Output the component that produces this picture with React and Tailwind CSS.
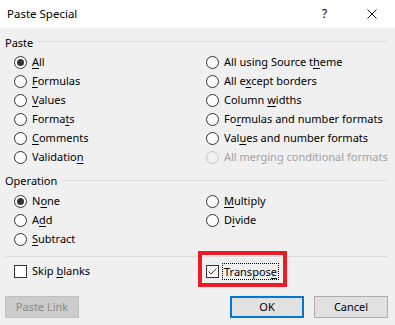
const pasteLeft = [
  ['', 'A', 'll', true],
  ['', 'F', 'ormulas'],
  ['', 'V', 'alues'],
  ['Forma', 't', 's'],
  ['', 'C', 'omments'],
  ['Validatio', 'n', ''],
];

const pasteRight = [
  ['All using Source t', 'h', 'eme'],
  ['All e', 'x', 'cept borders'],
  ['Column ', 'w', 'idths'],
  ['Fo', 'r', 'mulas and number formats'],
  ['Val', 'u', 'es and number formats'],
  ['All merging conditional formats', '', '', false, true],
];

const opLeft = [
  ['N', 'o', 'ne', true],
  ['A', 'd', 'd'],
  ['', 'S', 'ubtract'],
];

const opRight = [
  ['', 'M', 'ultiply'],
  ['D', 'i', 'vide'],
];

const Label = ({ pre, k, post }) => (
  <span className="whitespace-nowrap">
    {pre}
    {k && <span className="underline underline-offset-2 decoration-1">{k}</span>}
    {post}
  </span>
);

const Radio = ({ item }) => {
  const [pre, k, post, checked, disabled] = item;
  return (
    <div className={`h-[19px] flex items-center gap-[5px] ${disabled ? 'text-[#a0a0a0]' : 'text-black'}`}>
      <span
        className={`w-[13px] h-[13px] rounded-full border flex items-center justify-center shrink-0 ${
          disabled ? 'border-[#c6c6c6] bg-[#f0f0f0]' : 'border-[#333] bg-white'
        }`}
      >
        {checked && <span className="w-[7px] h-[7px] rounded-full bg-[#333]" />}
      </span>
      <Label pre={pre} k={k} post={post} />
    </div>
  );
};

const GroupHeader = ({ title, lineGap }) => (
  <div className="h-[16px] flex items-start">
    <span className="leading-[16px]">{title}</span>
    <span className={`flex-1 h-px bg-[#dcdcdc] ${lineGap}`} />
  </div>
);

const Button = ({ children, variant }) => {
  const styles = {
    default: 'bg-[#e1e1e1] border border-[#adadad] text-black',
    primary: 'bg-[#e1e1e1] border-2 border-[#0078d7] text-black',
    disabled: 'bg-[#cccccc] border border-[#bfbfbf] text-[#8a8a8a]',
  };
  return (
    <div className={`w-[74px] h-[22px] flex items-center justify-center ${styles[variant]}`}>
      {children}
    </div>
  );
};

export default function App() {
  return (
    <div className="w-[395px] h-[325px] bg-[#f0f0f0] text-[11px] font-['Noto_Sans',sans-serif] text-black overflow-hidden">
      {/* Title bar */}
      <div className="h-[28px] bg-white flex items-center pl-[7px] text-[11.5px]">
        <span className="flex-1">Paste Special</span>
        <span className="w-[10px] text-[12px] mr-[35px]">?</span>
        <svg width="10" height="10" viewBox="0 0 10 10" className="mr-[18px]">
          <path d="M0.5 0.5 L9.5 9.5 M9.5 0.5 L0.5 9.5" stroke="#111" strokeWidth="1" />
        </svg>
      </div>

      <div className="pl-[5px] pr-[7px] pt-[7px]">
        <GroupHeader title="Paste" lineGap="ml-[5px] mt-[6px]" />
        <div className="mt-[2px] pl-[9px] flex">
          <div className="w-[192px] shrink-0 flex flex-col">
            {pasteLeft.map((it, i) => (
              <Radio key={i} item={it} />
            ))}
          </div>
          <div className="flex flex-col">
            {pasteRight.map((it, i) => (
              <Radio key={i} item={it} />
            ))}
          </div>
        </div>

        <div className="mt-[6px]">
          <GroupHeader title="Operation" lineGap="ml-[5px] mt-[7px]" />
        </div>
        <div className="mt-[3px] pl-[9px] flex">
          <div className="w-[192px] shrink-0 flex flex-col">
            {opLeft.map((it, i) => (
              <Radio key={i} item={it} />
            ))}
          </div>
          <div className="flex flex-col">
            {opRight.map((it, i) => (
              <Radio key={i} item={it} />
            ))}
          </div>
        </div>

        <div className="mt-[7px] h-px bg-[#dcdcdc]" />

        <div className="mt-[5px] pl-[9px] flex h-[19px]">
          <div className="w-[192px] shrink-0 flex items-center gap-[5px]">
            <span className="w-[13px] h-[13px] border border-[#333] bg-white shrink-0" />
            <Label pre="Skip " k="b" post="lanks" />
          </div>
          <div className="relative flex items-center gap-[3px]">
            <span className="w-[13px] h-[13px] border border-[#333] bg-white shrink-0 flex items-center justify-center">
              <svg width="11" height="11" viewBox="0 0 11 11">
                <path d="M1.5 5.5 L4 8 L9.5 2.5" fill="none" stroke="#333" strokeWidth="1" />
              </svg>
            </span>
            <span className="border border-dotted border-black px-[1px] leading-[15px]">
              <Label pre="Transpos" k="e" post="" />
            </span>
            {/* annotation */}
            <div className="absolute left-[-8px] top-[-11px] w-[89px] h-[36px] border-4 border-[#ed1c24]" />
          </div>
        </div>

        <div className="mt-[15px] flex items-center justify-between">
          <Button variant="disabled">Paste Link</Button>
          <div className="flex gap-[10px]">
            <Button variant="primary">OK</Button>
            <Button variant="default">Cancel</Button>
          </div>
        </div>
      </div>
    </div>
  );
}
